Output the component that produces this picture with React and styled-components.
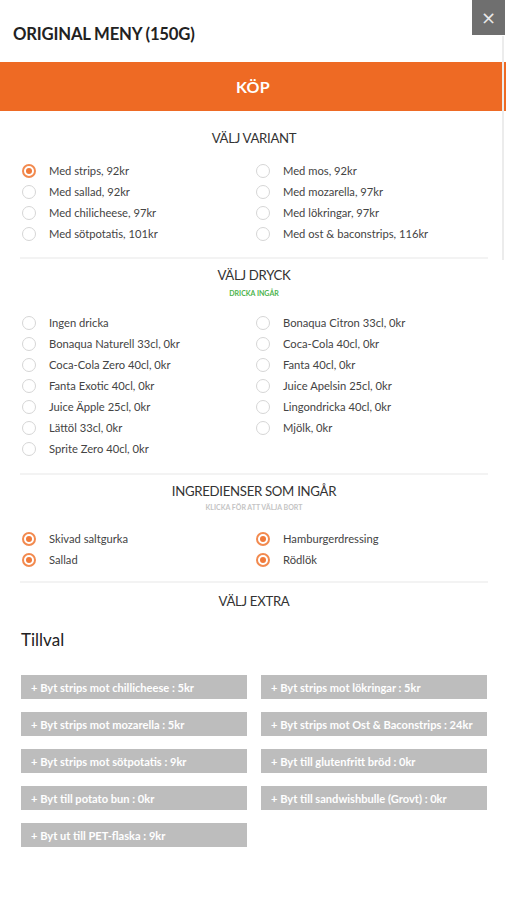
import React from 'react';
import styled, { createGlobalStyle } from 'styled-components';

const GlobalStyle = createGlobalStyle`
  body {
    margin: 0;
    background: #fff;
    font-family: Lato, 'Open Sans', sans-serif;
    color: #333;
  }
`;

const Page = styled.div`
  position: relative;
  width: 506px;
  min-height: 900px;
  background: #fff;
`;

const Header = styled.div`
  display: flex;
  align-items: center;
  height: 62px;
  padding: 6px 13px 0;
  box-sizing: border-box;
`;

const Title = styled.h1`
  margin: 0;
  font-size: 16.7px;
  font-weight: 700;
  color: #222;
  letter-spacing: -0.2px;
`;

const CloseButton = styled.button`
  position: absolute;
  top: 0;
  right: 1px;
  width: 33px;
  height: 35px;
  border: none;
  background: #6f6f6f;
  color: #e8e8e8;
  font-size: 18px;
  line-height: 35px;
  padding: 0;
  font-family: 'DejaVu Sans', sans-serif;
`;

const ScrollThumb = styled.div`
  position: absolute;
  top: 36px;
  right: 2px;
  width: 2px;
  height: 224px;
  background: #ececec;
`;

const BuyBar = styled.button`
  display: block;
  width: 100%;
  height: 49px;
  border: none;
  background: #ee6a24;
  color: #fff;
  font-family: Lato, sans-serif;
  font-size: 16px;
  font-weight: 700;
  letter-spacing: 0.3px;
`;

const Content = styled.div`
  padding: 0 18px 0 20px;
`;

const Section = styled.section`
  padding: ${p => p.$top}px 0 ${p => p.$bottom}px;
  border-bottom: ${p => (p.$last ? 'none' : '2px solid #f3f3f3')};
`;

const Heading = styled.h2`
  margin: 0;
  text-align: center;
  font-size: 13.2px;
  line-height: 18px;
  font-weight: 400;
  color: #333;
  letter-spacing: -0.3px;
`;

const SubHeading = styled.div`
  margin-top: ${p => p.$gap}px;
  text-align: center;
  font-size: 7px;
  line-height: 10px;
  font-weight: 700;
  color: ${p => p.$color};
`;

const OptionGrid = styled.div`
  display: grid;
  grid-template-columns: 1fr 1fr;
  margin-top: ${p => p.$top}px;
`;

const Option = styled.label`
  display: flex;
  align-items: center;
  height: 21px;
  padding-left: 2px;
  font-size: 11.2px;
  color: #444;
`;

const Radio = styled.span`
  position: relative;
  flex: none;
  width: 14px;
  height: 14px;
  box-sizing: border-box;
  border-radius: 50%;
  margin-right: 13px;
  border: ${p => (p.$checked ? '2px solid #f28a4f' : '1px solid #d6d6d6')};

  &::after {
    content: '';
    display: ${p => (p.$checked ? 'block' : 'none')};
    position: absolute;
    left: 2px;
    top: 2px;
    width: 6px;
    height: 6px;
    border-radius: 50%;
    background: #f07a3a;
  }
`;

const ExtraTitle = styled.h3`
  margin: 19px 1px 0;
  font-size: 17px;
  line-height: 22px;
  font-weight: 400;
  color: #222;
`;

const ExtraGrid = styled.div`
  display: grid;
  grid-template-columns: 226px 226px;
  column-gap: 14px;
  row-gap: 13px;
  margin: 24px 0 0 1px;
`;

const ExtraButton = styled.button`
  height: 24px;
  border: none;
  background: #bdbdbd;
  color: #fff;
  text-align: left;
  padding: 0 0 0 10px;
  font-family: Lato, sans-serif;
  font-size: 11.1px;
  font-weight: 700;
`;

const variants = [
  ['Med strips, 92kr', true],
  ['Med mos, 92kr'],
  ['Med sallad, 92kr'],
  ['Med mozarella, 97kr'],
  ['Med chilicheese, 97kr'],
  ['Med lökringar, 97kr'],
  ['Med sötpotatis, 101kr'],
  ['Med ost & baconstrips, 116kr'],
];

const drinks = [
  'Ingen dricka',
  'Bonaqua Citron 33cl, 0kr',
  'Bonaqua Naturell 33cl, 0kr',
  'Coca-Cola 40cl, 0kr',
  'Coca-Cola Zero 40cl, 0kr',
  'Fanta 40cl, 0kr',
  'Fanta Exotic 40cl, 0kr',
  'Juice Apelsin 25cl, 0kr',
  'Juice Äpple 25cl, 0kr',
  'Lingondricka 40cl, 0kr',
  'Lättöl 33cl, 0kr',
  'Mjölk, 0kr',
  'Sprite Zero 40cl, 0kr',
];

const ingredients = ['Skivad saltgurka', 'Hamburgerdressing', 'Sallad', 'Rödlök'];

const extras = [
  '+ Byt strips mot chillicheese : 5kr',
  '+ Byt strips mot lökringar : 5kr',
  '+ Byt strips mot mozarella : 5kr',
  '+ Byt strips mot Ost & Baconstrips : 24kr',
  '+ Byt strips mot sötpotatis : 9kr',
  '+ Byt till glutenfritt bröd : 0kr',
  '+ Byt till potato bun : 0kr',
  '+ Byt till sandwishbulle (Grovt) : 0kr',
  '+ Byt ut till PET-flaska : 9kr',
];

const App = () => (
  <Page>
    <GlobalStyle />
    <Header>
      <Title>ORIGINAL MENY (150G)</Title>
    </Header>
    <CloseButton>×</CloseButton>
    <ScrollThumb />
    <BuyBar>KÖP</BuyBar>
    <Content>
      <Section $top={18} $bottom={13}>
        <Heading>VÄLJ VARIANT</Heading>
        <OptionGrid $top={13}>
          {variants.map(([label, checked]) => (
            <Option key={label}>
              <Radio $checked={checked} />
              {label}
            </Option>
          ))}
        </OptionGrid>
      </Section>
      <Section $top={7} $bottom={14}>
        <Heading>VÄLJ DRYCK</Heading>
        <SubHeading $gap={4} $color="#4cb34c">DRICKA INGÅR</SubHeading>
        <OptionGrid $top={14}>
          {drinks.map(label => (
            <Option key={label}>
              <Radio />
              {label}
            </Option>
          ))}
        </OptionGrid>
      </Section>
      <Section $top={7} $bottom={11}>
        <Heading>INGREDIENSER SOM INGÅR</Heading>
        <SubHeading $gap={2} $color="#c4c4c4">KLICKA FÖR ATT VÄLJA BORT</SubHeading>
        <OptionGrid $top={16}>
          {ingredients.map(label => (
            <Option key={label}>
              <Radio $checked />
              {label}
            </Option>
          ))}
        </OptionGrid>
      </Section>
      <Section $top={9} $bottom={0} $last>
        <Heading>VÄLJ EXTRA</Heading>
        <ExtraTitle>Tillval</ExtraTitle>
        <ExtraGrid>
          {extras.map(label => (
            <ExtraButton key={label}>{label}</ExtraButton>
          ))}
        </ExtraGrid>
      </Section>
    </Content>
  </Page>
);

export default App;
